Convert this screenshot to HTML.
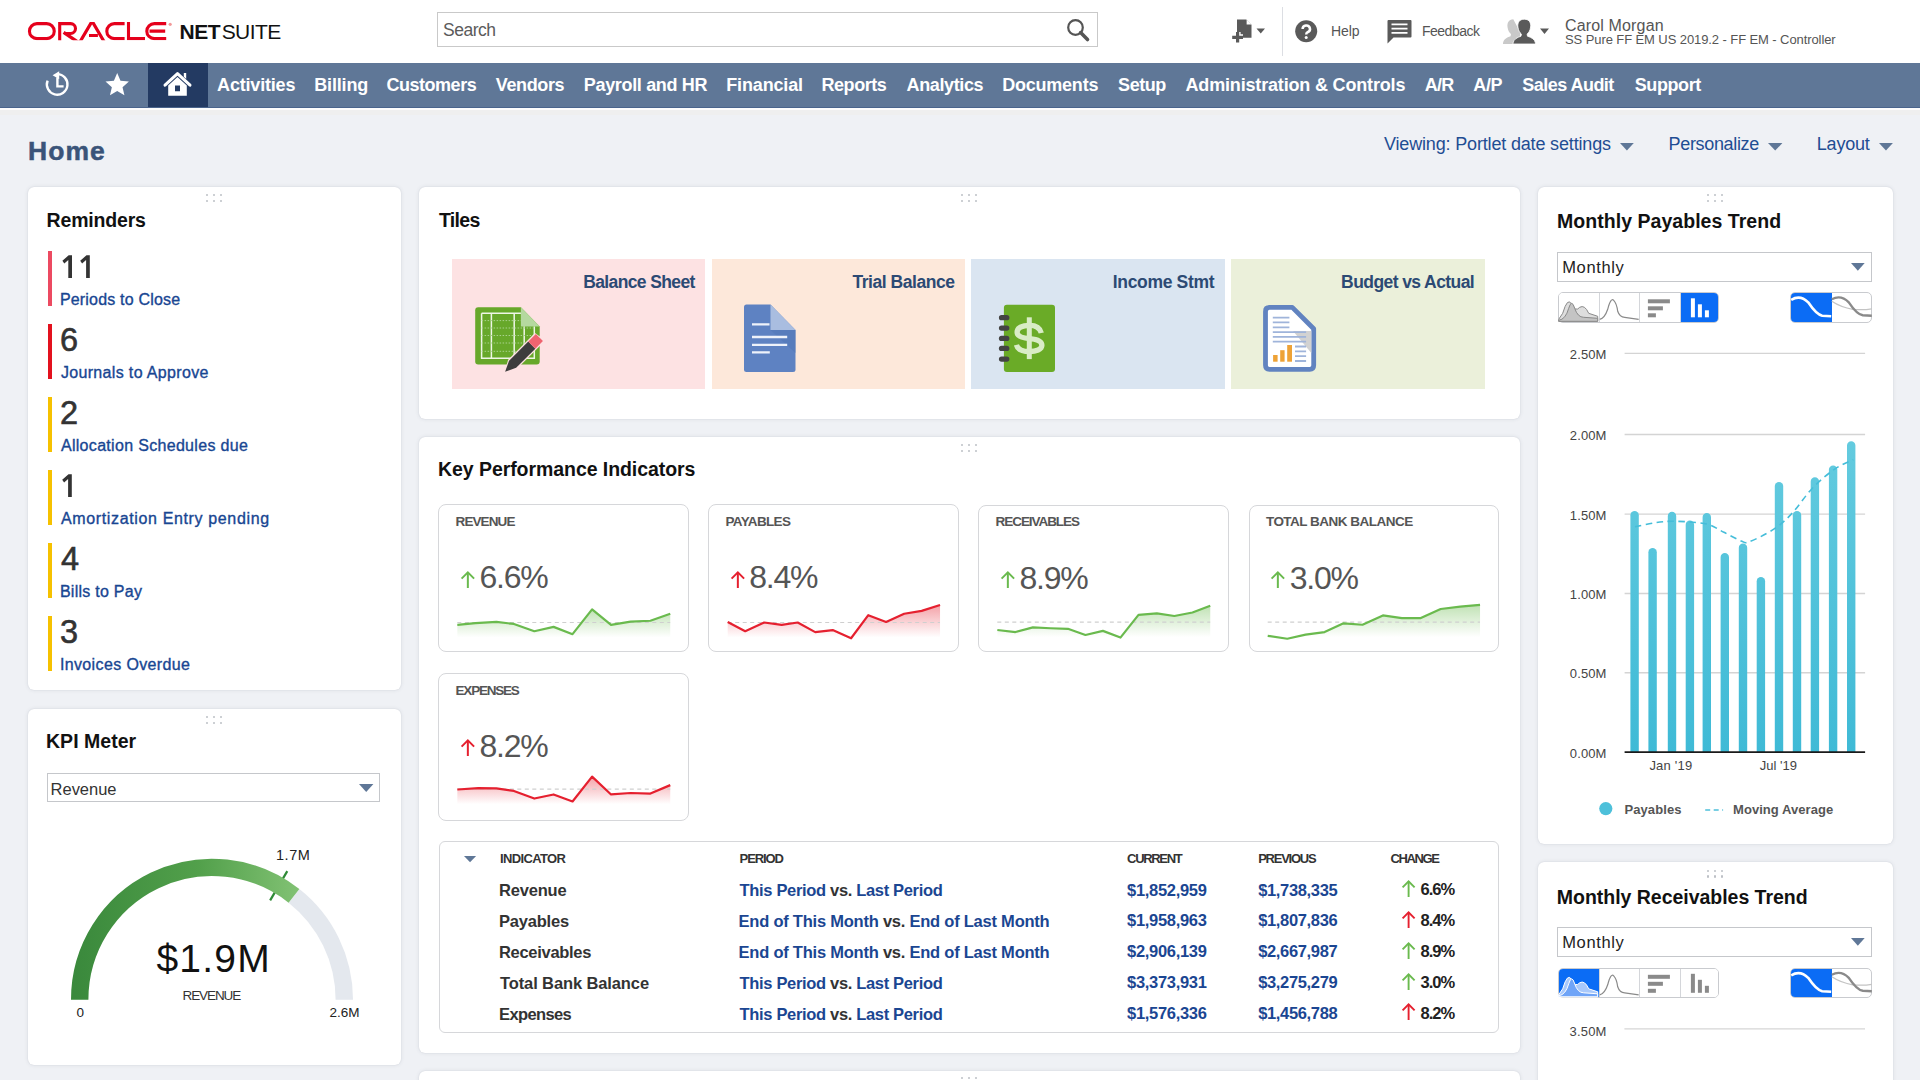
<!DOCTYPE html>
<html><head><meta charset="utf-8">
<style>
*{box-sizing:border-box;margin:0;padding:0}
html,body{width:1920px;height:1080px;overflow:hidden}
body{background:#eff1f5;font-family:"Liberation Sans",sans-serif;position:relative;color:#222}
.a{position:absolute;white-space:nowrap}
#hdr{position:absolute;left:0;top:0;width:1920px;height:63px;background:#fff}
#nav{position:absolute;left:0;top:63px;width:1920px;height:45px;background:#5f7797}
#nav .it{position:absolute;top:11px;color:#fff;font-weight:bold;font-size:18px;line-height:22px}
#navline{position:absolute;left:0;top:107px;width:1920px;height:1px;background:#4a648c}
#navshade{position:absolute;left:0;top:108px;width:1920px;height:7px;background:linear-gradient(#fdfdfd 0,#fdfdfd 2px,#efefef 2.5px,#efefef 6.5px,#f0f1f5 7px)}
.card{position:absolute;background:#fff;border-radius:6px;box-shadow:0 0 1px rgba(40,50,70,.16),0 0 4px rgba(40,50,70,.10)}
.dots{position:absolute;width:16px;height:6px;top:8px;background-image:radial-gradient(circle,#c9cdd3 0.9px,transparent 1.1px);background-size:6px 5px}
.ct{position:absolute;left:19px;top:20px;font-size:19.5px;font-weight:bold;color:#111}
</style></head><body>
<div id="hdr">
<svg class="a" style="left:0;top:0" width="300" height="63" viewBox="0 0 300 63">
 <defs><clipPath id="oc"><rect x="0" y="22.1" width="300" height="18.1"/></clipPath></defs>
 <g fill="none" stroke="#e5001c" stroke-width="3.1" clip-path="url(#oc)">
  <rect x="29.45" y="23.65" width="24.8" height="15" rx="7.5"/>
  <path d="M59.7 41 V23.65 H70.6 A4.9 4.9 0 0 1 70.6 33.45 H64.4"/>
  <path d="M63.6 32.4 L78.6 42.5" stroke-width="3.3"/>
  <path d="M79.9 42 L92.1 21.2 L104.3 42" stroke-width="3.2"/>
  <path d="M89.0 35.45 H97.9"/>
  <path d="M124.6 23.65 H114.3 A7.5 7.5 0 0 0 114.3 38.65 H124.6"/>
  <path d="M128.5 22.1 V38.65 H145"/>
  <path d="M166.2 23.65 H154.3 A7.5 7.5 0 0 0 154.3 38.65 H166.2 M149.5 31.1 H165.2"/>
 </g>
 <circle cx="170.2" cy="24.3" r="1.6" fill="#f29a9a"/>
</svg>
<div class="a" style="left:179.5px;top:20px;font-size:21px;line-height:24px;color:#111"><b style="letter-spacing:-0.44px">NET</b><span style="letter-spacing:-0.58px;margin-left:1.5px">SUITE</span></div>
<div class="a" style="left:437px;top:12px;width:661px;height:35px;border:1px solid #c9c9c9;background:#fff"></div>
<div class="a" style="left:443px;top:19px;font-size:17.5px;line-height:22px;color:#5b5b5b;letter-spacing:-0.5px">Search</div>
<svg class="a" style="left:1062px;top:16px" width="32" height="28" viewBox="0 0 32 28"><circle cx="13.5" cy="11.5" r="7.3" fill="none" stroke="#555" stroke-width="2.2"/><path d="M18.6 16.6 L25.5 23.5" stroke="#555" stroke-width="3.6" stroke-linecap="round"/></svg>
<svg class="a" style="left:1228px;top:16px" width="40" height="32" viewBox="0 0 40 32">
 <path d="M9 3.6 H18.3 L23.5 8.8 V21.8 H9 Z" fill="#5a5a5a"/>
 <path d="M18.6 3.6 L23.5 8.5 H18.6 Z" fill="#fff"/>
 <path d="M4.2 21.3 H15 M9.6 16 V26.6" stroke="#fff" stroke-width="6"/>
 <path d="M4.2 21.3 H15 M9.6 16 V26.6" stroke="#5a5a5a" stroke-width="3.2"/>
 <path d="M28.5 12.6 H37 L32.75 17.6 Z" fill="#5a5a5a"/>
</svg>
<div class="a" style="left:1282px;top:7px;width:1px;height:49px;background:#dcdee3"></div>
<svg class="a" style="left:1295px;top:19.5px" width="24" height="24" viewBox="0 0 24 24"><circle cx="11.2" cy="11.2" r="11" fill="#5a5a5a"/><path d="M7.6 9.0 A3.7 3.5 0 1 1 12.6 12.2 C11.4 12.8 11.2 13.5 11.2 14.6" fill="none" stroke="#fff" stroke-width="2.5"/><circle cx="11.2" cy="17.6" r="1.5" fill="#fff"/></svg>
<div class="a" style="left:1331px;top:22px;font-size:14px;line-height:18px;color:#555;letter-spacing:-0.1px">Help</div>
<svg class="a" style="left:1386px;top:19px" width="28" height="28" viewBox="0 0 28 28"><path d="M2.5 1 H24.5 Q25.5 1 25.5 2 V17.5 Q25.5 18.6 24.5 18.6 H7.5 L1.5 24.5 V2 Q1.5 1 2.5 1 Z" fill="#5a5a5a"/><path d="M5.5 5.4 H21.5 M5.5 9.6 H21.5 M5.5 13.8 H21.5" stroke="#fff" stroke-width="1.7"/></svg>
<div class="a" style="left:1422px;top:22px;font-size:14px;line-height:18px;color:#555;letter-spacing:-0.5px">Feedback</div>
<svg class="a" style="left:1500px;top:17px" width="52" height="30" viewBox="0 0 52 30">
 <path d="M13.3 2.2 C8.6 2.2 7 6 7.5 10 C7.9 13.4 9.2 15.6 11 17 L10.6 19.2 C6.6 20.5 3.8 22.2 3 26 V27 H20 V15 Z" fill="#c9c9c9"/>
 <path d="M24.2 2.2 C19 2.2 17.4 6 17.9 10 C18.3 13.4 19.6 15.6 21.4 17 L21 19.2 C17 20.5 13.8 22.2 13 26 V27 H35.5 V26 C34.7 22.2 31.5 20.5 27.5 19.2 L27.1 17 C28.9 15.6 30.2 13.4 30.6 10 C31.1 6 29.5 2.2 24.2 2.2 Z" fill="#5a5a5a" stroke="#fff" stroke-width="0.8"/>
 <path d="M40 11.4 H49 L44.5 17 Z" fill="#5a5a5a"/>
</svg>
<div class="a" style="left:1565px;top:17px;font-size:16px;line-height:18px;color:#555;letter-spacing:0.15px">Carol Morgan</div>
<div class="a" style="left:1565px;top:31.5px;font-size:13px;line-height:15px;color:#555;letter-spacing:-0.09px">SS Pure FF EM US 2019.2 - FF EM - Controller</div>
</div>
<div id="nav">
<div class="a" style="left:148px;top:0;width:60px;height:45px;background:#233a62"></div>
<svg class="a" style="left:40px;top:5px" width="160" height="36" viewBox="40 68 160 36">
  <path d="M57.2 74.1 A10.3 10.3 0 1 1 47.6 80.6" fill="none" stroke="#fff" stroke-width="2.4"/>
 <path d="M59.2 71.3 L59.2 79.2 L52.6 75.2 Z" fill="#fff"/>
 <path d="M57.4 77.6 V86.4 H63.6" fill="none" stroke="#fff" stroke-width="2.4"/>
 <path d="M117.20 73.10 L120.49 80.87 L128.90 81.60 L122.53 87.13 L124.43 95.35 L117.20 91.00 L109.97 95.35 L111.87 87.13 L105.50 81.60 L113.91 80.87 Z" fill="#fff"/>
<path d="M165 85.2 L177.5 73.6 L190 85.2" fill="none" stroke="#fff" stroke-width="3" stroke-linecap="round" stroke-linejoin="round"/>
 <path d="M183.8 73 H186.2 V79 L183.8 76.8 Z" fill="#fff"/>
 <path d="M168.2 85.5 L177.5 77 L186.8 85.5 V95.8 H168.2 Z M175 85.6 V91.2 H180 V85.6 Z" fill="#fff" fill-rule="evenodd"/>
</svg>
<div class="it a" style="left:217.1px;letter-spacing:-0.19px">Activities</div>
<div class="it a" style="left:314.2px;letter-spacing:-0.15px">Billing</div>
<div class="it a" style="left:386.5px;letter-spacing:-0.48px">Customers</div>
<div class="it a" style="left:495.8px;letter-spacing:-0.37px">Vendors</div>
<div class="it a" style="left:583.8px;letter-spacing:-0.33px">Payroll and HR</div>
<div class="it a" style="left:726.2px;letter-spacing:-0.14px">Financial</div>
<div class="it a" style="left:821.4px;letter-spacing:-0.42px">Reports</div>
<div class="it a" style="left:906.6px;letter-spacing:-0.38px">Analytics</div>
<div class="it a" style="left:1002.3px;letter-spacing:-0.24px">Documents</div>
<div class="it a" style="left:1118.1px;letter-spacing:-0.45px">Setup</div>
<div class="it a" style="left:1185.5px;letter-spacing:-0.17px">Administration &amp; Controls</div>
<div class="it a" style="left:1424.7px;letter-spacing:-0.75px">A/R</div>
<div class="it a" style="left:1473.3px;letter-spacing:-0.4px">A/P</div>
<div class="it a" style="left:1522.2px;letter-spacing:-0.52px">Sales Audit</div>
<div class="it a" style="left:1634.7px;letter-spacing:-0.4px">Support</div>
</div>
<div id="navline"></div>
<div id="navshade"></div>

<div class="a" style="left:28.10px;top:137.74px;font-size:26.5px;line-height:26.5px;font-weight:bold;color:#3a5479;letter-spacing:1.038px;-webkit-text-stroke:0.5px #3a5479;">Home</div>
<div class="a" style="left:1384.00px;top:134.65px;font-size:18px;line-height:18px;color:#1f4d93;letter-spacing:-0.166px;">Viewing: Portlet date settings</div>
<svg class="a" style="left:1618.7px;top:141.6px" width="15.799999999999955" height="9.599999999999994"><path d="M1 1 H14.799999999999955 L7.899999999999977 8.599999999999994 Z" fill="#5f7797"/></svg>
<div class="a" style="left:1668.60px;top:134.65px;font-size:18px;line-height:18px;color:#1f4d93;letter-spacing:-0.344px;">Personalize</div>
<svg class="a" style="left:1766.6px;top:141.6px" width="16.40000000000009" height="9.599999999999994"><path d="M1 1 H15.400000000000091 L8.200000000000045 8.599999999999994 Z" fill="#5f7797"/></svg>
<div class="a" style="left:1816.80px;top:134.65px;font-size:18px;line-height:18px;color:#1f4d93;letter-spacing:-0.209px;">Layout</div>
<svg class="a" style="left:1877.7px;top:141.6px" width="15.899999999999864" height="9.599999999999994"><path d="M1 1 H14.899999999999864 L7.949999999999932 8.599999999999994 Z" fill="#5f7797"/></svg>
<div class="card" style="left:27.5px;top:186.5px;width:373.5px;height:503.5px"></div>
<div class="card" style="left:27.5px;top:708.6px;width:373.5px;height:356.5px"></div>
<div class="card" style="left:419px;top:186.5px;width:1100.7px;height:232.4px"></div>
<div class="card" style="left:419px;top:436.7px;width:1100.7px;height:616.4px"></div>
<div class="card" style="left:419px;top:1070.7px;width:1100.7px;height:60px"></div>
<div class="card" style="left:1537.8px;top:186.5px;width:354.9px;height:657.4px"></div>
<div class="card" style="left:1537.8px;top:862.3px;width:354.9px;height:260px"></div>
<div class="a" style="left:205.50px;top:194.30px;width:2.2px;height:2.2px;border-radius:1.1px;background:#bdc0c6"></div><div class="a" style="left:212.70px;top:194.30px;width:2.2px;height:2.2px;border-radius:1.1px;background:#bdc0c6"></div><div class="a" style="left:219.90px;top:194.30px;width:2.2px;height:2.2px;border-radius:1.1px;background:#bdc0c6"></div><div class="a" style="left:205.50px;top:199.70px;width:2.2px;height:2.2px;border-radius:1.1px;background:#bdc0c6"></div><div class="a" style="left:212.70px;top:199.70px;width:2.2px;height:2.2px;border-radius:1.1px;background:#bdc0c6"></div><div class="a" style="left:219.90px;top:199.70px;width:2.2px;height:2.2px;border-radius:1.1px;background:#bdc0c6"></div>
<div class="a" style="left:205.50px;top:716.30px;width:2.2px;height:2.2px;border-radius:1.1px;background:#bdc0c6"></div><div class="a" style="left:212.70px;top:716.30px;width:2.2px;height:2.2px;border-radius:1.1px;background:#bdc0c6"></div><div class="a" style="left:219.90px;top:716.30px;width:2.2px;height:2.2px;border-radius:1.1px;background:#bdc0c6"></div><div class="a" style="left:205.50px;top:721.70px;width:2.2px;height:2.2px;border-radius:1.1px;background:#bdc0c6"></div><div class="a" style="left:212.70px;top:721.70px;width:2.2px;height:2.2px;border-radius:1.1px;background:#bdc0c6"></div><div class="a" style="left:219.90px;top:721.70px;width:2.2px;height:2.2px;border-radius:1.1px;background:#bdc0c6"></div>
<div class="a" style="left:960.60px;top:194.30px;width:2.2px;height:2.2px;border-radius:1.1px;background:#bdc0c6"></div><div class="a" style="left:967.80px;top:194.30px;width:2.2px;height:2.2px;border-radius:1.1px;background:#bdc0c6"></div><div class="a" style="left:975.00px;top:194.30px;width:2.2px;height:2.2px;border-radius:1.1px;background:#bdc0c6"></div><div class="a" style="left:960.60px;top:199.70px;width:2.2px;height:2.2px;border-radius:1.1px;background:#bdc0c6"></div><div class="a" style="left:967.80px;top:199.70px;width:2.2px;height:2.2px;border-radius:1.1px;background:#bdc0c6"></div><div class="a" style="left:975.00px;top:199.70px;width:2.2px;height:2.2px;border-radius:1.1px;background:#bdc0c6"></div>
<div class="a" style="left:960.60px;top:444.30px;width:2.2px;height:2.2px;border-radius:1.1px;background:#bdc0c6"></div><div class="a" style="left:967.80px;top:444.30px;width:2.2px;height:2.2px;border-radius:1.1px;background:#bdc0c6"></div><div class="a" style="left:975.00px;top:444.30px;width:2.2px;height:2.2px;border-radius:1.1px;background:#bdc0c6"></div><div class="a" style="left:960.60px;top:449.70px;width:2.2px;height:2.2px;border-radius:1.1px;background:#bdc0c6"></div><div class="a" style="left:967.80px;top:449.70px;width:2.2px;height:2.2px;border-radius:1.1px;background:#bdc0c6"></div><div class="a" style="left:975.00px;top:449.70px;width:2.2px;height:2.2px;border-radius:1.1px;background:#bdc0c6"></div>
<div class="a" style="left:960.60px;top:1077.30px;width:2.2px;height:2.2px;border-radius:1.1px;background:#bdc0c6"></div><div class="a" style="left:967.80px;top:1077.30px;width:2.2px;height:2.2px;border-radius:1.1px;background:#bdc0c6"></div><div class="a" style="left:975.00px;top:1077.30px;width:2.2px;height:2.2px;border-radius:1.1px;background:#bdc0c6"></div><div class="a" style="left:960.60px;top:1082.70px;width:2.2px;height:2.2px;border-radius:1.1px;background:#bdc0c6"></div><div class="a" style="left:967.80px;top:1082.70px;width:2.2px;height:2.2px;border-radius:1.1px;background:#bdc0c6"></div><div class="a" style="left:975.00px;top:1082.70px;width:2.2px;height:2.2px;border-radius:1.1px;background:#bdc0c6"></div>
<div class="a" style="left:1706.50px;top:194.30px;width:2.2px;height:2.2px;border-radius:1.1px;background:#bdc0c6"></div><div class="a" style="left:1713.70px;top:194.30px;width:2.2px;height:2.2px;border-radius:1.1px;background:#bdc0c6"></div><div class="a" style="left:1720.90px;top:194.30px;width:2.2px;height:2.2px;border-radius:1.1px;background:#bdc0c6"></div><div class="a" style="left:1706.50px;top:199.70px;width:2.2px;height:2.2px;border-radius:1.1px;background:#bdc0c6"></div><div class="a" style="left:1713.70px;top:199.70px;width:2.2px;height:2.2px;border-radius:1.1px;background:#bdc0c6"></div><div class="a" style="left:1720.90px;top:199.70px;width:2.2px;height:2.2px;border-radius:1.1px;background:#bdc0c6"></div>
<div class="a" style="left:1706.50px;top:870.00px;width:2.2px;height:2.2px;border-radius:1.1px;background:#bdc0c6"></div><div class="a" style="left:1713.70px;top:870.00px;width:2.2px;height:2.2px;border-radius:1.1px;background:#bdc0c6"></div><div class="a" style="left:1720.90px;top:870.00px;width:2.2px;height:2.2px;border-radius:1.1px;background:#bdc0c6"></div><div class="a" style="left:1706.50px;top:875.40px;width:2.2px;height:2.2px;border-radius:1.1px;background:#bdc0c6"></div><div class="a" style="left:1713.70px;top:875.40px;width:2.2px;height:2.2px;border-radius:1.1px;background:#bdc0c6"></div><div class="a" style="left:1720.90px;top:875.40px;width:2.2px;height:2.2px;border-radius:1.1px;background:#bdc0c6"></div>
<div class="a" style="left:46.60px;top:211.36px;font-size:19.5px;line-height:19.5px;font-weight:bold;color:#111;letter-spacing:-0.180px;">Reminders</div>
<div class="a" style="left:47.8px;top:251.3px;width:4px;height:55px;background:#ec4a61"></div>
<svg class="a" style="left:0;top:0;overflow:visible" width="1" height="1"><path d="M72.00 255.30 V277.90 H68.30 V260.00 L64.30 263.40 L62.40 260.80 L68.70 255.30 Z" fill="#333"/><path d="M89.80 255.30 V277.90 H86.10 V260.00 L82.10 263.40 L80.20 260.80 L86.50 255.30 Z" fill="#333"/></svg>
<div class="a" style="left:59.90px;top:292.01px;font-size:16px;line-height:16px;color:#184692;letter-spacing:0.187px;-webkit-text-stroke:0.35px #184692;">Periods to Close</div>
<div class="a" style="left:47.8px;top:324.3px;width:4px;height:55px;background:#e3111e"></div>
<div class="a" style="left:59.90px;top:323.86px;font-size:32.5px;line-height:32.5px;color:#333;-webkit-text-stroke:0.6px #333;">6</div>
<div class="a" style="left:60.90px;top:365.01px;font-size:16px;line-height:16px;color:#184692;letter-spacing:0.339px;-webkit-text-stroke:0.35px #184692;">Journals to Approve</div>
<div class="a" style="left:47.8px;top:397.3px;width:4px;height:55px;background:#f6c100"></div>
<div class="a" style="left:59.90px;top:396.86px;font-size:32.5px;line-height:32.5px;color:#333;-webkit-text-stroke:0.6px #333;">2</div>
<div class="a" style="left:60.90px;top:438.01px;font-size:16px;line-height:16px;color:#184692;letter-spacing:0.314px;-webkit-text-stroke:0.35px #184692;">Allocation Schedules due</div>
<div class="a" style="left:47.8px;top:470.3px;width:4px;height:55px;background:#f6c100"></div>
<svg class="a" style="left:0;top:0;overflow:visible" width="1" height="1"><path d="M71.80 474.30 V496.90 H68.10 V479.00 L64.10 482.40 L62.20 479.80 L68.50 474.30 Z" fill="#333"/></svg>
<div class="a" style="left:60.90px;top:511.01px;font-size:16px;line-height:16px;color:#184692;letter-spacing:0.644px;-webkit-text-stroke:0.35px #184692;">Amortization Entry pending</div>
<div class="a" style="left:47.8px;top:543.3px;width:4px;height:55px;background:#f6c100"></div>
<div class="a" style="left:60.90px;top:542.86px;font-size:32.5px;line-height:32.5px;color:#333;-webkit-text-stroke:0.6px #333;">4</div>
<div class="a" style="left:59.90px;top:584.01px;font-size:16px;line-height:16px;color:#184692;letter-spacing:0.260px;-webkit-text-stroke:0.35px #184692;">Bills to Pay</div>
<div class="a" style="left:47.8px;top:616.3px;width:4px;height:55px;background:#f6c100"></div>
<div class="a" style="left:59.90px;top:615.86px;font-size:32.5px;line-height:32.5px;color:#333;-webkit-text-stroke:0.6px #333;">3</div>
<div class="a" style="left:59.90px;top:657.01px;font-size:16px;line-height:16px;color:#184692;letter-spacing:0.373px;-webkit-text-stroke:0.35px #184692;">Invoices Overdue</div>
<div class="a" style="left:46.00px;top:731.76px;font-size:19.5px;line-height:19.5px;font-weight:bold;color:#111;letter-spacing:0.019px;">KPI Meter</div>
<div class="a" style="left:47px;top:773.4px;width:333.3px;height:28.6px;border:1px solid #c5c7cb;background:#fff"></div>
<div class="a" style="left:50.60px;top:780.65px;font-size:16.5px;line-height:16.5px;color:#333;letter-spacing:-0.029px;">Revenue</div>
<svg class="a" style="left:357.6px;top:783px" width="16.399999999999977" height="10"><path d="M1 1 H15.399999999999977 L8.199999999999989 9 Z" fill="#5f7797"/></svg>
<svg class="a" style="left:0;top:0" width="420" height="1080"><defs><linearGradient id="gg" x1="75" y1="0" x2="300" y2="0" gradientUnits="userSpaceOnUse"><stop offset="0" stop-color="#3a893c"/><stop offset="0.55" stop-color="#52a04b"/><stop offset="1" stop-color="#82c274"/></linearGradient></defs><path d="M270.15 900.37 L287.28 871.12" stroke="#2f8a37" stroke-width="2.2"/><path d="M293.97 895.85 A132.3 132.3 0 0 1 344.30 999.70" fill="none" stroke="#e4e8ee" stroke-width="17.40" /><path d="M79.70 999.70 A132.3 132.3 0 0 1 293.97 895.85" fill="none" stroke="url(#gg)" stroke-width="17.40" /></svg>
<div class="a" style="left:276.00px;top:848.11px;font-size:14.5px;line-height:14.5px;color:#222;letter-spacing:0.548px;">1.7M</div>
<div class="a" style="left:156.40px;top:939.21px;font-size:39px;line-height:39px;color:#111;letter-spacing:1.224px;">$1.9M</div>
<div class="a" style="left:182.50px;top:988.74px;font-size:13.5px;line-height:13.5px;color:#333;letter-spacing:-1.093px;">REVENUE</div>
<div class="a" style="left:76.60px;top:1006.04px;font-size:13.5px;line-height:13.5px;color:#222;">0</div>
<div class="a" style="left:329.40px;top:1006.04px;font-size:13.5px;line-height:13.5px;color:#222;letter-spacing:0.044px;">2.6M</div>
<div class="a" style="left:439.00px;top:211.36px;font-size:19.5px;line-height:19.5px;font-weight:bold;color:#111;letter-spacing:-0.710px;">Tiles</div>
<div class="a" style="left:451.5px;top:259.3px;width:253.7px;height:129.5px;background:#fde2e3"></div>
<div class="a" style="left:583.20px;top:273.92px;font-size:17.5px;line-height:17.5px;font-weight:bold;color:#2c4a74;letter-spacing:-0.617px;">Balance Sheet</div>
<div class="a" style="left:712.2px;top:259.3px;width:252.6px;height:129.5px;background:#fde8da"></div>
<div class="a" style="left:852.50px;top:273.92px;font-size:17.5px;line-height:17.5px;font-weight:bold;color:#2c4a74;letter-spacing:-0.462px;">Trial Balance</div>
<div class="a" style="left:971.3px;top:259.3px;width:253.8px;height:129.5px;background:#dae5f1"></div>
<div class="a" style="left:1112.80px;top:273.92px;font-size:17.5px;line-height:17.5px;font-weight:bold;color:#2c4a74;letter-spacing:-0.329px;">Income Stmt</div>
<div class="a" style="left:1230.8px;top:259.3px;width:254.2px;height:129.5px;background:#ebf0da"></div>
<div class="a" style="left:1341.10px;top:273.92px;font-size:17.5px;line-height:17.5px;font-weight:bold;color:#2c4a74;letter-spacing:-0.578px;">Budget vs Actual</div>
<svg class="a" style="left:470px;top:300px" width="80" height="80" viewBox="470 300 80 80">
 <path d="M478.2 307.2 H520.9 L539.7 326.5 V361.6 Q539.7 364.6 536.7 364.6 H478.2 Q475.2 364.6 475.2 361.6 V310.2 Q475.2 307.2 478.2 307.2 Z" fill="#67a82a"/>
 <path d="M520.9 307.2 L539.7 326.5 H520.9 Z" fill="#b5d99f"/>
 <path d="M481.6 313.2 H520.9 M481.6 313.2 V358.3 H534.3 V326.5" fill="none" stroke="#eef6e6" stroke-width="1.5"/>
 <path d="M491.4 313.2 V358.3 M514.2 313.2 V358.3 M524.2 326.5 V358.3" stroke="#eef6e6" stroke-width="1.5"/>
 <path d="M481.6 320.6 H520.9 M481.6 328 H534.3 M481.6 335.5 H534.3 M481.6 343 H534.3 M481.6 351.3 H534.3" stroke="#a9d28c" stroke-width="1" stroke-dasharray="1.5 1.5"/>
 <path d="M504.25 372.65 L517.05 368.75 L543.85 341.95 L540.25 336.65 L534.95 333.05 L508.15 359.85 Z" fill="#fde2e3"/>
 <path d="M505.10 371.80 L516.14 367.84 L535.34 348.64 L528.26 341.56 L509.06 360.76 Z" fill="#3d3d3d"/>
 <path d="M535.34 348.64 L542.94 341.04 L535.86 333.96 L528.26 341.56 Z" fill="#ef6470"/>
</svg>
<svg class="a" style="left:740px;top:300px" width="60" height="80" viewBox="740 300 60 80">
 <path d="M746.5 304.5 H770.5 L795.5 330 V369.5 Q795.5 372 793 372 H746.5 Q744 372 744 369.5 V307 Q744 304.5 746.5 304.5 Z" fill="#5e82c2"/>
 <path d="M770.5 304.5 L795.5 330 H770.5 Z" fill="#a9bde0"/>
 <path d="M770.5 330 L795.5 330 L795.5 353 Z" fill="#5478b8" opacity="0.6"/>
 <path d="M752 324.3 H769.5 M752 337 H787.2 M752 344.8 H787.2 M752 352.4 H769.8" stroke="#eef2fa" stroke-width="2.3"/>
</svg>
<svg class="a" style="left:995px;top:300px" width="66" height="80" viewBox="995 300 66 80">
 <rect x="1003.9" y="304.7" width="51.1" height="67.3" rx="3" fill="#6aab27"/>
 <g fill="#444"><rect x="998.9" y="315" width="10.5" height="5.3" rx="2.65"/><rect x="998.9" y="325.4" width="10.5" height="5.3" rx="2.65"/><rect x="998.9" y="335.8" width="10.5" height="5.3" rx="2.65"/><rect x="998.9" y="345.8" width="10.5" height="5.3" rx="2.65"/><rect x="998.9" y="356.4" width="10.5" height="5.3" rx="2.65"/></g>
 <path d="M1041.3 333 C1040 327.5 1035 325.3 1029.5 325.3 C1022 325.3 1017.1 328 1017.1 332.2 C1017.1 336.6 1022 338 1029.5 338.6 C1037 339.2 1041.9 341 1041.9 345.3 C1041.9 349.5 1036 351.5 1029.5 351.5 C1022 351.5 1017.5 349 1016.4 344.8" fill="none" stroke="#d9ecc6" stroke-width="5.3"/>
 <path d="M1029.3 317.3 V359.1" stroke="#d9ecc6" stroke-width="5"/>
</svg>
<svg class="a" style="left:1258px;top:300px" width="64" height="80" viewBox="1258 300 64 80">
 <path d="M1269 307.4 H1292.3 L1313.7 328.8 V365.3 Q1313.7 369.3 1309.7 369.3 H1269.5 Q1265.5 369.3 1265.5 365.3 V311.4 Q1265.5 307.4 1269.5 307.4 Z" fill="#fff" stroke="#6183c0" stroke-width="4.8" stroke-linejoin="round"/>
 <path d="M1293 331 H1311.3 V353 Z" fill="#d2d2d2"/>
 <g stroke="#9fb4da" stroke-width="1.8">
  <path d="M1272.8 317.6 H1289.4 M1272.8 322.4 H1289.4 M1272.8 327.3 H1289.4 M1272.8 332.1 H1306.1 M1272.8 336.9 H1306.1 M1272.8 341.7 H1306.1"/>
  <path d="M1295 346.5 H1306.1 M1295 351.3 H1306.1 M1295 356.1 H1306.1 M1295 361 H1306.1"/>
 </g>
 <g fill="#eea236"><rect x="1273.1" y="355" width="4.5" height="6.7"/><rect x="1280.2" y="350.2" width="4.4" height="11.5"/><rect x="1287.2" y="345" width="4.8" height="16.7"/></g>
</svg>
<div class="a" style="left:438.00px;top:460.26px;font-size:19.5px;line-height:19.5px;font-weight:bold;color:#111;letter-spacing:-0.063px;">Key Performance Indicators</div>
<div class="a" style="left:438.4px;top:504.4px;width:250.5px;height:147.8px;border:1px solid #d6d7da;border-radius:8px"></div>
<div class="a" style="left:455.60px;top:515.14px;font-size:13.5px;line-height:13.5px;font-weight:bold;color:#555;letter-spacing:-0.910px;">REVENUE</div>
<svg class="a" style="left:459.79999999999995px;top:569.6px" width="16" height="20"><path d="M7.85 2.5 V18" stroke="#6aba4e" stroke-width="2"/><path d="M1.6 8.6 L7.85 2.3 L14.1 8.6" fill="none" stroke="#6aba4e" stroke-width="2"/></svg>
<div class="a" style="left:479.40px;top:561.42px;font-size:32px;line-height:32px;color:#555;letter-spacing:-1.195px;">6.6%</div>
<svg class="a" style="left:0;top:0;overflow:visible" width="1" height="1">
<defs><linearGradient id="kg0" x1="0" y1="609.4" x2="0" y2="637.5" gradientUnits="userSpaceOnUse"><stop offset="0" stop-color="#6aba4e" stop-opacity="0.42"/><stop offset="1" stop-color="#6aba4e" stop-opacity="0"/></linearGradient></defs>
<path d="M457.33 638.50 L457.33 624.83 L475.42 623.08 L496.42 621.92 L513.92 623.96 L534.33 631.25 L553.58 626.87 L572.54 634.16 L592.08 609.37 L611.04 624.83 L630.58 621.62 L650.41 620.75 L670.25 613.75 L670.25 638.50 Z" fill="url(#kg0)"/>
<path d="M457.3 622.50 H670.2" stroke="#cfcfcf" stroke-width="1.2" stroke-dasharray="4 3.5"/>
<polyline points="457.33,624.83 475.42,623.08 496.42,621.92 513.92,623.96 534.33,631.25 553.58,626.87 572.54,634.16 592.08,609.37 611.04,624.83 630.58,621.62 650.41,620.75 670.25,613.75" fill="none" stroke="#6aba4e" stroke-width="2.2" stroke-linejoin="round"/>
</svg>
<div class="a" style="left:708.2px;top:504.4px;width:250.5px;height:147.8px;border:1px solid #d6d7da;border-radius:8px"></div>
<div class="a" style="left:725.40px;top:515.14px;font-size:13.5px;line-height:13.5px;font-weight:bold;color:#555;letter-spacing:-0.632px;">PAYABLES</div>
<svg class="a" style="left:729.6px;top:569.6px" width="16" height="20"><path d="M7.85 2.5 V18" stroke="#e5202f" stroke-width="2"/><path d="M1.6 8.6 L7.85 2.3 L14.1 8.6" fill="none" stroke="#e5202f" stroke-width="2"/></svg>
<div class="a" style="left:749.20px;top:561.42px;font-size:32px;line-height:32px;color:#555;letter-spacing:-1.195px;">8.4%</div>
<svg class="a" style="left:0;top:0;overflow:visible" width="1" height="1">
<defs><linearGradient id="kg1" x1="0" y1="605.0" x2="0" y2="637.5" gradientUnits="userSpaceOnUse"><stop offset="0" stop-color="#e5202f" stop-opacity="0.42"/><stop offset="1" stop-color="#e5202f" stop-opacity="0"/></linearGradient></defs>
<path d="M727.71 638.50 L727.71 621.92 L745.21 631.25 L764.16 622.50 L781.66 624.83 L797.71 622.50 L815.21 632.12 L832.70 630.08 L851.08 638.25 L868.29 615.21 L886.08 621.92 L904.16 613.75 L921.66 610.83 L940.04 605.00 L940.04 638.50 Z" fill="url(#kg1)"/>
<path d="M727.7 622.50 H940.0" stroke="#cfcfcf" stroke-width="1.2" stroke-dasharray="4 3.5"/>
<polyline points="727.71,621.92 745.21,631.25 764.16,622.50 781.66,624.83 797.71,622.50 815.21,632.12 832.70,630.08 851.08,638.25 868.29,615.21 886.08,621.92 904.16,613.75 921.66,610.83 940.04,605.00" fill="none" stroke="#e5202f" stroke-width="2.2" stroke-linejoin="round"/>
</svg>
<div class="a" style="left:978.4px;top:504.6px;width:250.5px;height:147.8px;border:1px solid #d6d7da;border-radius:8px"></div>
<div class="a" style="left:995.60px;top:515.34px;font-size:13.5px;line-height:13.5px;font-weight:bold;color:#555;letter-spacing:-1.061px;">RECEIVABLES</div>
<svg class="a" style="left:999.8px;top:569.8000000000001px" width="16" height="20"><path d="M7.85 2.5 V18" stroke="#6aba4e" stroke-width="2"/><path d="M1.6 8.6 L7.85 2.3 L14.1 8.6" fill="none" stroke="#6aba4e" stroke-width="2"/></svg>
<div class="a" style="left:1019.40px;top:561.62px;font-size:32px;line-height:32px;color:#555;letter-spacing:-1.195px;">8.9%</div>
<svg class="a" style="left:0;top:0;overflow:visible" width="1" height="1">
<defs><linearGradient id="kg2" x1="0" y1="605.8" x2="0" y2="637.1" gradientUnits="userSpaceOnUse"><stop offset="0" stop-color="#6aba4e" stop-opacity="0.42"/><stop offset="1" stop-color="#6aba4e" stop-opacity="0"/></linearGradient></defs>
<path d="M997.33 638.12 L997.33 630.00 L1015.42 632.04 L1032.92 627.37 L1050.42 628.25 L1067.92 628.83 L1085.42 634.96 L1102.92 630.87 L1120.42 637.58 L1138.50 614.83 L1156.87 613.37 L1174.37 616.00 L1192.46 612.50 L1210.25 605.79 L1210.25 638.12 Z" fill="url(#kg2)"/>
<path d="M997.3 622.12 H1210.2" stroke="#cfcfcf" stroke-width="1.2" stroke-dasharray="4 3.5"/>
<polyline points="997.33,630.00 1015.42,632.04 1032.92,627.37 1050.42,628.25 1067.92,628.83 1085.42,634.96 1102.92,630.87 1120.42,637.58 1138.50,614.83 1156.87,613.37 1174.37,616.00 1192.46,612.50 1210.25,605.79" fill="none" stroke="#6aba4e" stroke-width="2.2" stroke-linejoin="round"/>
</svg>
<div class="a" style="left:1248.7px;top:504.6px;width:250.5px;height:147.8px;border:1px solid #d6d7da;border-radius:8px"></div>
<div class="a" style="left:1265.90px;top:515.34px;font-size:13.5px;line-height:13.5px;font-weight:bold;color:#555;letter-spacing:-0.514px;">TOTAL BANK BALANCE</div>
<svg class="a" style="left:1270.1000000000001px;top:569.8000000000001px" width="16" height="20"><path d="M7.85 2.5 V18" stroke="#6aba4e" stroke-width="2"/><path d="M1.6 8.6 L7.85 2.3 L14.1 8.6" fill="none" stroke="#6aba4e" stroke-width="2"/></svg>
<div class="a" style="left:1289.70px;top:561.62px;font-size:32px;line-height:32px;color:#555;letter-spacing:-1.195px;">3.0%</div>
<svg class="a" style="left:0;top:0;overflow:visible" width="1" height="1">
<defs><linearGradient id="kg3" x1="0" y1="604.9" x2="0" y2="637.1" gradientUnits="userSpaceOnUse"><stop offset="0" stop-color="#6aba4e" stop-opacity="0.42"/><stop offset="1" stop-color="#6aba4e" stop-opacity="0"/></linearGradient></defs>
<path d="M1267.71 638.12 L1267.71 635.83 L1287.25 638.75 L1305.62 634.67 L1324.58 632.04 L1343.54 623.29 L1362.50 624.75 L1382.91 615.42 L1401.87 618.04 L1420.83 618.04 L1440.66 609.00 L1460.20 606.67 L1480.04 604.92 L1480.04 638.12 Z" fill="url(#kg3)"/>
<path d="M1267.7 622.12 H1480.0" stroke="#cfcfcf" stroke-width="1.2" stroke-dasharray="4 3.5"/>
<polyline points="1267.71,635.83 1287.25,638.75 1305.62,634.67 1324.58,632.04 1343.54,623.29 1362.50,624.75 1382.91,615.42 1401.87,618.04 1420.83,618.04 1440.66,609.00 1460.20,606.67 1480.04,604.92" fill="none" stroke="#6aba4e" stroke-width="2.2" stroke-linejoin="round"/>
</svg>
<div class="a" style="left:438.4px;top:673.1px;width:250.5px;height:147.8px;border:1px solid #d6d7da;border-radius:8px"></div>
<div class="a" style="left:455.60px;top:683.84px;font-size:13.5px;line-height:13.5px;font-weight:bold;color:#555;letter-spacing:-1.225px;">EXPENSES</div>
<svg class="a" style="left:459.79999999999995px;top:738.3000000000001px" width="16" height="20"><path d="M7.85 2.5 V18" stroke="#e5202f" stroke-width="2"/><path d="M1.6 8.6 L7.85 2.3 L14.1 8.6" fill="none" stroke="#e5202f" stroke-width="2"/></svg>
<div class="a" style="left:479.40px;top:730.12px;font-size:32px;line-height:32px;color:#555;letter-spacing:-1.195px;">8.2%</div>
<svg class="a" style="left:0;top:0;overflow:visible" width="1" height="1">
<defs><linearGradient id="kg4" x1="0" y1="776.7" x2="0" y2="804.2" gradientUnits="userSpaceOnUse"><stop offset="0" stop-color="#e5202f" stop-opacity="0.42"/><stop offset="1" stop-color="#e5202f" stop-opacity="0"/></linearGradient></defs>
<path d="M457.33 805.21 L457.33 789.50 L478.33 788.04 L496.42 788.33 L513.92 790.96 L534.33 798.54 L553.58 794.46 L572.54 801.46 L592.08 776.67 L611.04 794.46 L630.58 793.00 L650.41 793.58 L670.25 785.12 L670.25 805.21 Z" fill="url(#kg4)"/>
<path d="M457.3 789.21 H670.2" stroke="#cfcfcf" stroke-width="1.2" stroke-dasharray="4 3.5"/>
<polyline points="457.33,789.50 478.33,788.04 496.42,788.33 513.92,790.96 534.33,798.54 553.58,794.46 572.54,801.46 592.08,776.67 611.04,794.46 630.58,793.00 650.41,793.58 670.25,785.12" fill="none" stroke="#e5202f" stroke-width="2.2" stroke-linejoin="round"/>
</svg>
<div class="a" style="left:438.7px;top:840.6px;width:1060px;height:192.6px;border:1px solid #d6d7da;border-radius:6px"></div>
<svg class="a" style="left:463.4px;top:854.7px" width="14.100000000000023" height="8.299999999999955"><path d="M1 1 H13.100000000000023 L7.050000000000011 7.2999999999999545 Z" fill="#5f7797"/></svg>
<div class="a" style="left:500.00px;top:851.90px;font-size:13px;line-height:13px;font-weight:bold;color:#333;letter-spacing:-0.641px;">INDICATOR</div>
<div class="a" style="left:739.60px;top:851.90px;font-size:13px;line-height:13px;font-weight:bold;color:#333;letter-spacing:-1.131px;">PERIOD</div>
<div class="a" style="left:1127.10px;top:851.90px;font-size:13px;line-height:13px;font-weight:bold;color:#333;letter-spacing:-1.319px;">CURRENT</div>
<div class="a" style="left:1258.20px;top:851.90px;font-size:13px;line-height:13px;font-weight:bold;color:#333;letter-spacing:-1.245px;">PREVIOUS</div>
<div class="a" style="left:1390.40px;top:851.90px;font-size:13px;line-height:13px;font-weight:bold;color:#333;letter-spacing:-1.373px;">CHANGE</div>
<div class="a" style="left:499.00px;top:882.45px;font-size:16.5px;line-height:16.5px;font-weight:bold;color:#333;letter-spacing:-0.184px;">Revenue</div>
<div class="a" style="left:739.60px;top:882.45px;font-size:16.5px;line-height:16.5px;font-weight:bold;color:#1b4692;letter-spacing:-0.332px;">This Period <span style="color:#333">vs.</span> Last Period</div>
<div class="a" style="left:1127.10px;top:881.55px;font-size:16.5px;line-height:16.5px;font-weight:bold;color:#1b4692;letter-spacing:-0.312px;">$1,852,959</div>
<div class="a" style="left:1258.20px;top:881.55px;font-size:16.5px;line-height:16.5px;font-weight:bold;color:#1b4692;letter-spacing:-0.345px;">$1,738,335</div>
<svg class="a" style="left:1400.6px;top:878.80px" width="16" height="20"><path d="M7.6 2.5 V18" stroke="#6aba4e" stroke-width="1.9"/><path d="M1.6 8.4 L7.6 2.3 L13.6 8.4" fill="none" stroke="#6aba4e" stroke-width="1.9"/></svg>
<div class="a" style="left:1420.50px;top:881.25px;font-size:16.5px;line-height:16.5px;font-weight:bold;color:#222;letter-spacing:-0.946px;">6.6%</div>
<div class="a" style="left:499.00px;top:913.35px;font-size:16.5px;line-height:16.5px;font-weight:bold;color:#333;letter-spacing:-0.211px;">Payables</div>
<div class="a" style="left:738.60px;top:913.35px;font-size:16.5px;line-height:16.5px;font-weight:bold;color:#1b4692;letter-spacing:-0.232px;">End of This Month <span style="color:#333">vs.</span> End of Last Month</div>
<div class="a" style="left:1127.10px;top:912.45px;font-size:16.5px;line-height:16.5px;font-weight:bold;color:#1b4692;letter-spacing:-0.312px;">$1,958,963</div>
<div class="a" style="left:1258.20px;top:912.45px;font-size:16.5px;line-height:16.5px;font-weight:bold;color:#1b4692;letter-spacing:-0.345px;">$1,807,836</div>
<svg class="a" style="left:1400.6px;top:909.70px" width="16" height="20"><path d="M7.6 2.5 V18" stroke="#e5202f" stroke-width="1.9"/><path d="M1.6 8.4 L7.6 2.3 L13.6 8.4" fill="none" stroke="#e5202f" stroke-width="1.9"/></svg>
<div class="a" style="left:1420.50px;top:912.15px;font-size:16.5px;line-height:16.5px;font-weight:bold;color:#222;letter-spacing:-0.946px;">8.4%</div>
<div class="a" style="left:499.00px;top:944.25px;font-size:16.5px;line-height:16.5px;font-weight:bold;color:#333;letter-spacing:-0.302px;">Receivables</div>
<div class="a" style="left:738.60px;top:944.25px;font-size:16.5px;line-height:16.5px;font-weight:bold;color:#1b4692;letter-spacing:-0.232px;">End of This Month <span style="color:#333">vs.</span> End of Last Month</div>
<div class="a" style="left:1127.10px;top:943.35px;font-size:16.5px;line-height:16.5px;font-weight:bold;color:#1b4692;letter-spacing:-0.312px;">$2,906,139</div>
<div class="a" style="left:1258.20px;top:943.35px;font-size:16.5px;line-height:16.5px;font-weight:bold;color:#1b4692;letter-spacing:-0.345px;">$2,667,987</div>
<svg class="a" style="left:1400.6px;top:940.60px" width="16" height="20"><path d="M7.6 2.5 V18" stroke="#6aba4e" stroke-width="1.9"/><path d="M1.6 8.4 L7.6 2.3 L13.6 8.4" fill="none" stroke="#6aba4e" stroke-width="1.9"/></svg>
<div class="a" style="left:1420.50px;top:943.05px;font-size:16.5px;line-height:16.5px;font-weight:bold;color:#222;letter-spacing:-0.946px;">8.9%</div>
<div class="a" style="left:500.00px;top:975.15px;font-size:16.5px;line-height:16.5px;font-weight:bold;color:#333;letter-spacing:-0.113px;">Total Bank Balance</div>
<div class="a" style="left:739.60px;top:975.15px;font-size:16.5px;line-height:16.5px;font-weight:bold;color:#1b4692;letter-spacing:-0.332px;">This Period <span style="color:#333">vs.</span> Last Period</div>
<div class="a" style="left:1127.10px;top:974.25px;font-size:16.5px;line-height:16.5px;font-weight:bold;color:#1b4692;letter-spacing:-0.312px;">$3,373,931</div>
<div class="a" style="left:1258.20px;top:974.25px;font-size:16.5px;line-height:16.5px;font-weight:bold;color:#1b4692;letter-spacing:-0.345px;">$3,275,279</div>
<svg class="a" style="left:1400.6px;top:971.50px" width="16" height="20"><path d="M7.6 2.5 V18" stroke="#6aba4e" stroke-width="1.9"/><path d="M1.6 8.4 L7.6 2.3 L13.6 8.4" fill="none" stroke="#6aba4e" stroke-width="1.9"/></svg>
<div class="a" style="left:1420.50px;top:973.95px;font-size:16.5px;line-height:16.5px;font-weight:bold;color:#222;letter-spacing:-0.946px;">3.0%</div>
<div class="a" style="left:499.00px;top:1006.05px;font-size:16.5px;line-height:16.5px;font-weight:bold;color:#333;letter-spacing:-0.610px;">Expenses</div>
<div class="a" style="left:739.60px;top:1006.05px;font-size:16.5px;line-height:16.5px;font-weight:bold;color:#1b4692;letter-spacing:-0.332px;">This Period <span style="color:#333">vs.</span> Last Period</div>
<div class="a" style="left:1127.10px;top:1005.15px;font-size:16.5px;line-height:16.5px;font-weight:bold;color:#1b4692;letter-spacing:-0.312px;">$1,576,336</div>
<div class="a" style="left:1258.20px;top:1005.15px;font-size:16.5px;line-height:16.5px;font-weight:bold;color:#1b4692;letter-spacing:-0.345px;">$1,456,788</div>
<svg class="a" style="left:1400.6px;top:1002.40px" width="16" height="20"><path d="M7.6 2.5 V18" stroke="#e5202f" stroke-width="1.9"/><path d="M1.6 8.4 L7.6 2.3 L13.6 8.4" fill="none" stroke="#e5202f" stroke-width="1.9"/></svg>
<div class="a" style="left:1420.50px;top:1004.85px;font-size:16.5px;line-height:16.5px;font-weight:bold;color:#222;letter-spacing:-0.946px;">8.2%</div>
<div class="a" style="left:1557.00px;top:211.76px;font-size:19.5px;line-height:19.5px;font-weight:bold;color:#111;letter-spacing:0.042px;">Monthly Payables Trend</div>
<div class="a" style="left:1557.2px;top:251.8px;width:314.6px;height:29.8px;border:1px solid #c5c7cb;background:#fff"></div>
<div class="a" style="left:1562.20px;top:258.75px;font-size:16.5px;line-height:16.5px;color:#222;letter-spacing:0.646px;">Monthly</div>
<svg class="a" style="left:1849.8px;top:262.0px" width="15.700000000000045" height="9.800000000000011"><path d="M1 1 H14.700000000000045 L7.850000000000023 8.800000000000011 Z" fill="#5f7797"/></svg>
<div class="a" style="left:1557.7px;top:292.3px;width:161.1px;height:30.3px;border:1px solid #c9cbcf;border-radius:5px;background:#fff;overflow:hidden"><div class="a" style="left:-1.0px;top:-1px;width:41.0px;height:30.3px;background:#fff;border-left:0px solid #d4d6da"></div><div class="a" style="left:40.0px;top:-1px;width:40.2px;height:30.3px;background:#fff;border-left:1px solid #d4d6da"></div><div class="a" style="left:80.2px;top:-1px;width:41.0px;height:30.3px;background:#fff;border-left:1px solid #d4d6da"></div><div class="a" style="left:121.2px;top:-1px;width:38.9px;height:30.3px;background:#0b6cf5;border-left:1px solid #d4d6da"></div></div><svg class="a" style="left:0;top:0;overflow:visible" width="1" height="1"><path d="M1558.7 319.3 L1562.7 313.3 Q1567.7 296.3 1571.7 304.3 Q1575.7 312.3 1579.7 307.3 Q1584.7 304.3 1588.7 313.3 L1597.7 316.3 V321.3 H1558.7 Z" fill="#dedede" stroke="#8a8a8a" stroke-width="1"/><path d="M1558.7 320.3 Q1565.7 319.3 1568.7 308.3 Q1571.7 298.3 1574.7 308.3 Q1577.7 317.3 1583.7 317.3 L1597.7 318.3 V321.3 H1558.7 Z" fill="#c4c4c4" stroke="#8a8a8a" stroke-width="1"/><path d="M1599.7 319.3 Q1604.7 318.3 1607.7 309.3 Q1610.7 297.3 1613.7 300.3 Q1616.7 303.3 1617.7 311.3 Q1619.7 317.3 1624.7 317.3 L1638.7 319.3" fill="none" stroke="#8a8a8a" stroke-width="1.2"/><g fill="#8a8a8a"><rect x="1647.9" y="299.3" width="22" height="4"/><rect x="1647.9" y="306.3" width="15" height="4"/><rect x="1647.9" y="313.3" width="8" height="4"/></g><g fill="#fff"><rect x="1690.9" y="298.3" width="4" height="19"/><rect x="1697.9" y="304.3" width="4" height="13"/><rect x="1704.9" y="310.3" width="4" height="7"/></g></svg><div class="a" style="left:1790.2px;top:292.3px;width:81.6px;height:30.3px;border:1px solid #c9cbcf;border-radius:5px;background:#fff;overflow:hidden"><div class="a" style="left:-1px;top:-1px;width:41.6px;height:30.3px;background:#0b6cf5"></div></div><svg class="a" style="left:0;top:0;overflow:visible" width="1" height="1"><path d="M1791.2 299.8 Q1800.2 294.3 1808.2 302.3 Q1816.2 314.3 1822.2 315.8 L1831.2 316.3" fill="none" stroke="#fff" stroke-width="2.6"/><path d="M1831.8 301.3 Q1840.8 307.3 1852.8 309.3 Q1862.8 310.3 1871.8 308.8" fill="none" stroke="#c4c4c4" stroke-width="1.3"/><path d="M1831.8 299.3 Q1840.8 294.3 1848.8 302.3 Q1856.8 314.3 1862.8 315.3 L1871.8 315.8" fill="none" stroke="#8a8a8a" stroke-width="2.4"/></svg>
<svg class="a" style="left:0;top:0;overflow:visible" width="1" height="1"><defs><linearGradient id="barg" x1="0" y1="440" x2="0" y2="752" gradientUnits="userSpaceOnUse"><stop offset="0" stop-color="#64cbdf"/><stop offset="1" stop-color="#3fbad6"/></linearGradient></defs><path d="M1624.6 353.40 H1865.1" stroke="#d4d4d4" stroke-width="1.4"/><path d="M1624.6 434.50 H1865.1" stroke="#d4d4d4" stroke-width="1.4"/><path d="M1624.6 514.10 H1865.1" stroke="#d4d4d4" stroke-width="1.4"/><path d="M1624.6 593.50 H1865.1" stroke="#d4d4d4" stroke-width="1.4"/><path d="M1624.6 672.80 H1865.1" stroke="#d4d4d4" stroke-width="1.4"/><path d="M1630.40 752 V515.20 A4.2 4.2 0 0 1 1638.80 515.20 V752 Z" fill="url(#barg)"/><path d="M1648.40 752 V552.20 A4.2 4.2 0 0 1 1656.80 552.20 V752 Z" fill="url(#barg)"/><path d="M1667.80 752 V516.00 A4.2 4.2 0 0 1 1676.20 516.00 V752 Z" fill="url(#barg)"/><path d="M1685.70 752 V524.70 A4.2 4.2 0 0 1 1694.10 524.70 V752 Z" fill="url(#barg)"/><path d="M1702.60 752 V517.30 A4.2 4.2 0 0 1 1711.00 517.30 V752 Z" fill="url(#barg)"/><path d="M1720.60 752 V557.30 A4.2 4.2 0 0 1 1729.00 557.30 V752 Z" fill="url(#barg)"/><path d="M1738.80 752 V547.80 A4.2 4.2 0 0 1 1747.20 547.80 V752 Z" fill="url(#barg)"/><path d="M1756.70 752 V581.30 A4.2 4.2 0 0 1 1765.10 581.30 V752 Z" fill="url(#barg)"/><path d="M1774.80 752 V486.10 A4.2 4.2 0 0 1 1783.20 486.10 V752 Z" fill="url(#barg)"/><path d="M1792.80 752 V515.20 A4.2 4.2 0 0 1 1801.20 515.20 V752 Z" fill="url(#barg)"/><path d="M1810.70 752 V481.40 A4.2 4.2 0 0 1 1819.10 481.40 V752 Z" fill="url(#barg)"/><path d="M1828.90 752 V469.60 A4.2 4.2 0 0 1 1837.30 469.60 V752 Z" fill="url(#barg)"/><path d="M1847.00 752 V445.50 A4.2 4.2 0 0 1 1855.40 445.50 V752 Z" fill="url(#barg)"/><path d="M1624.6 752.2 H1865.1" stroke="#1a1a1a" stroke-width="1.7"/><path d="M1635 526.8 C1638.53 526.08 1650.03 523.42 1656.2 522.5 C1662.37 521.58 1666.50 521.38 1672 521.3 C1677.50 521.22 1683.18 521.48 1689.2 522 C1695.22 522.52 1702.32 522.68 1708.1 524.4 C1713.88 526.12 1718.38 529.53 1723.9 532.3 C1729.42 535.07 1736.95 539.43 1741.2 541 C1745.45 542.57 1743.97 543.67 1749.4 541.7 C1754.83 539.73 1766.70 533.92 1773.8 529.2 C1780.90 524.48 1785.57 520.23 1792 513.4 C1798.43 506.57 1805.33 495.55 1812.4 488.2 C1819.47 480.85 1827.58 474.07 1834.4 469.3 C1841.22 464.53 1850.15 461.22 1853.3 459.6" fill="none" stroke="#45bdd9" stroke-width="1.6" stroke-dasharray="6.5 4.5"/></svg>
<div class="a" style="left:1569.80px;top:347.80px;font-size:13px;line-height:13px;color:#444;letter-spacing:0.125px;">2.50M</div>
<div class="a" style="left:1569.80px;top:428.90px;font-size:13px;line-height:13px;color:#444;letter-spacing:0.125px;">2.00M</div>
<div class="a" style="left:1569.80px;top:508.50px;font-size:13px;line-height:13px;color:#444;letter-spacing:0.125px;">1.50M</div>
<div class="a" style="left:1569.80px;top:587.90px;font-size:13px;line-height:13px;color:#444;letter-spacing:0.125px;">1.00M</div>
<div class="a" style="left:1569.80px;top:667.20px;font-size:13px;line-height:13px;color:#444;letter-spacing:0.125px;">0.50M</div>
<div class="a" style="left:1569.80px;top:746.60px;font-size:13px;line-height:13px;color:#444;letter-spacing:0.125px;">0.00M</div>
<div class="a" style="left:1649.40px;top:758.70px;font-size:13px;line-height:13px;color:#444;letter-spacing:0.219px;">Jan '19</div>
<div class="a" style="left:1759.70px;top:758.70px;font-size:13px;line-height:13px;color:#444;letter-spacing:0.026px;">Jul '19</div>
<svg class="a" style="left:0;top:0;overflow:visible" width="1" height="1"><circle cx="1605.8" cy="808.6" r="6.6" fill="#4dc0da"/><path d="M1705.2 810 H1723.1" stroke="#4dc0da" stroke-width="1.5" stroke-dasharray="5 3.5"/></svg>
<div class="a" style="left:1624.40px;top:802.50px;font-size:13px;line-height:13px;font-weight:bold;color:#555;letter-spacing:0.108px;">Payables</div>
<div class="a" style="left:1733.00px;top:802.50px;font-size:13px;line-height:13px;font-weight:bold;color:#555;letter-spacing:0.054px;">Moving Average</div>
<div class="a" style="left:1556.80px;top:887.66px;font-size:19.5px;line-height:19.5px;font-weight:bold;color:#111;letter-spacing:-0.025px;">Monthly Receivables Trend</div>
<div class="a" style="left:1557.2px;top:927.1px;width:314.6px;height:30.0px;border:1px solid #c5c7cb;background:#fff"></div>
<div class="a" style="left:1562.20px;top:934.15px;font-size:16.5px;line-height:16.5px;color:#222;letter-spacing:0.646px;">Monthly</div>
<svg class="a" style="left:1849.8px;top:937.3000000000001px" width="15.700000000000045" height="9.799999999999955"><path d="M1 1 H14.700000000000045 L7.850000000000023 8.799999999999955 Z" fill="#5f7797"/></svg>
<div class="a" style="left:1557.7px;top:967.8px;width:161.1px;height:30.4px;border:1px solid #c9cbcf;border-radius:5px;background:#fff;overflow:hidden"><div class="a" style="left:-1.0px;top:-1px;width:41.0px;height:30.4px;background:#0b6cf5;border-left:0px solid #d4d6da"></div><div class="a" style="left:40.0px;top:-1px;width:40.2px;height:30.4px;background:#fff;border-left:1px solid #d4d6da"></div><div class="a" style="left:80.2px;top:-1px;width:41.0px;height:30.4px;background:#fff;border-left:1px solid #d4d6da"></div><div class="a" style="left:121.2px;top:-1px;width:38.9px;height:30.4px;background:#fff;border-left:1px solid #d4d6da"></div></div><svg class="a" style="left:0;top:0;overflow:visible" width="1" height="1"><path d="M1558.7 994.8 L1562.7 988.8 Q1567.7 971.8 1571.7 979.8 Q1575.7 987.8 1579.7 982.8 Q1584.7 979.8 1588.7 988.8 L1597.7 991.8 V996.8 H1558.7 Z" fill="#a9c9fb" stroke="#fff" stroke-width="1"/><path d="M1558.7 995.8 Q1565.7 994.8 1568.7 983.8 Q1571.7 973.8 1574.7 983.8 Q1577.7 992.8 1583.7 992.8 L1597.7 993.8 V996.8 H1558.7 Z" fill="#6fa4f7" stroke="#fff" stroke-width="1"/><path d="M1599.7 994.8 Q1604.7 993.8 1607.7 984.8 Q1610.7 972.8 1613.7 975.8 Q1616.7 978.8 1617.7 986.8 Q1619.7 992.8 1624.7 992.8 L1638.7 994.8" fill="none" stroke="#8a8a8a" stroke-width="1.2"/><g fill="#8a8a8a"><rect x="1647.9" y="974.8" width="22" height="4"/><rect x="1647.9" y="981.8" width="15" height="4"/><rect x="1647.9" y="988.8" width="8" height="4"/></g><g fill="#8a8a8a"><rect x="1690.9" y="973.8" width="4" height="19"/><rect x="1697.9" y="979.8" width="4" height="13"/><rect x="1704.9" y="985.8" width="4" height="7"/></g></svg><div class="a" style="left:1790.2px;top:967.8px;width:81.6px;height:30.4px;border:1px solid #c9cbcf;border-radius:5px;background:#fff;overflow:hidden"><div class="a" style="left:-1px;top:-1px;width:41.6px;height:30.4px;background:#0b6cf5"></div></div><svg class="a" style="left:0;top:0;overflow:visible" width="1" height="1"><path d="M1791.2 975.3 Q1800.2 969.8 1808.2 977.8 Q1816.2 989.8 1822.2 991.3 L1831.2 991.8" fill="none" stroke="#fff" stroke-width="2.6"/><path d="M1831.8 976.8 Q1840.8 982.8 1852.8 984.8 Q1862.8 985.8 1871.8 984.3" fill="none" stroke="#c4c4c4" stroke-width="1.3"/><path d="M1831.8 974.8 Q1840.8 969.8 1848.8 977.8 Q1856.8 989.8 1862.8 990.8 L1871.8 991.3" fill="none" stroke="#8a8a8a" stroke-width="2.4"/></svg>
<svg class="a" style="left:0;top:0;overflow:visible" width="1" height="1"><path d="M1624.4 1028.9 H1865" stroke="#d6d6d6" stroke-width="1.3"/></svg>
<div class="a" style="left:1569.60px;top:1025.00px;font-size:13px;line-height:13px;color:#444;letter-spacing:0.175px;">3.50M</div>
</body></html>
